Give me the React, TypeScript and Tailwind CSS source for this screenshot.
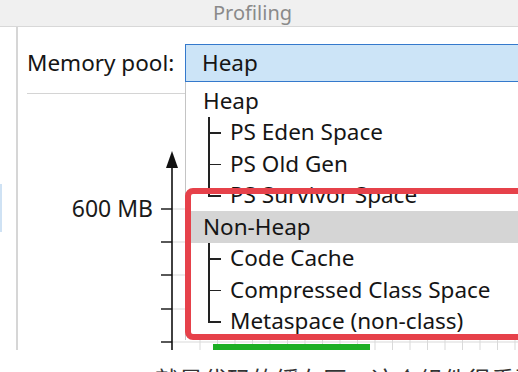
import React from "react";

const heapKids = ["PS Eden Space", "PS Old Gen", "PS Survivor Space"];
const nonHeapKids = ["Code Cache", "Compressed Class Space", "Metaspace (non-class)"];

function Branch({ last }: { last?: boolean }) {
  return (
    <span className="relative ml-[22px] w-[22px] self-stretch shrink-0">
      <span className={"absolute left-0 top-0 w-[1.5px] bg-[#222] " + (last ? "h-1/2" : "h-full")} />
      <span className="absolute left-0 top-1/2 h-[1.5px] w-[13px] bg-[#222]" />
    </span>
  );
}

function Row({ label, child, last, active }: { label: string; child?: boolean; last?: boolean; active?: boolean }) {
  return (
    <div className={"flex h-[31.5px] items-center " + (active ? "bg-[#d5d5d5]" : "")}>
      {child ? <Branch last={last} /> : <span className="w-[17px] shrink-0" />}
      <span className="whitespace-nowrap">{label}</span>
    </div>
  );
}

function Chart() {
  const ticks = [209, 242, 275, 309, 342];
  const cols: number[] = [];
  for (let x = 200; x < 520; x += 17.5) cols.push(x);
  return (
    <svg width="500" height="256" className="block">
      <g transform="translate(-18,-94)">
        {ticks.map((y) => (
          <line key={y} x1="172" x2="520" y1={y} y2={y} stroke="#d9d9d9" strokeWidth="1" />
        ))}
        {cols.map((x) => (
          <line key={x} x1={x} x2={x} y1="150" y2="350" stroke="#d9d9d9" strokeWidth="1" />
        ))}
        <rect x="213" y="344" width="157" height="8" fill="#1caf24" />
        <line x1="172" x2="172" y1="166" y2="352" stroke="#111" strokeWidth="1.6" />
        <polygon points="166,168 178,168 172,151" fill="#111" />
        {ticks.map((y) => (
          <line key={"t" + y} x1="161" x2="172" y1={y} y2={y} stroke="#111" strokeWidth="1.4" />
        ))}
        <text x="153" y="217" textAnchor="end" fontSize="23" fill="#1a1a1a" fontFamily="'Noto Sans', sans-serif">
          600 MB
        </text>
      </g>
    </svg>
  );
}

export default function App() {
  return (
    <div className="relative h-[372px] w-[518px] overflow-hidden bg-white font-['Noto_Sans',sans-serif] text-[#151515]">
      <div className="flex h-[27px] items-center border-b border-[#d8d8d8] bg-[#f0f0f0]">
        <span className="ml-[213px] text-[20px] leading-none text-[#8a8a8a]">Profiling</span>
      </div>

      <div className="flex h-[323px]">
        <div className="flex w-[18px] shrink-0 flex-col border-r-2 border-[#d6d6d6]">
          <span className="mt-[157px] h-[48px] w-[2px] bg-[#cfe2f4]" />
        </div>

        <div className="relative flex-1">
          <div className="flex items-center pl-[9px] pt-[17px]">
            <span className="w-[158px] shrink-0 whitespace-nowrap text-[22.5px]">Memory pool:</span>
            <div className="-mr-[10px] flex h-[38px] flex-1 items-center border-[1.5px] border-[#3479cc] bg-[#cce4f7] pl-[16px] text-[22.5px]">
              Heap
            </div>
          </div>
          <div className="ml-[9px] mt-[11px] h-px w-[158px] bg-[#d4d4d4]" />
          <Chart />

          <div className="absolute left-[167px] top-[55px] -right-[10px] h-[258px] border-l border-[#c4c4c4] bg-white pt-[3px] text-[22.5px] leading-none">
            <Row label="Heap" />
            {heapKids.map((k, i) => (
              <Row key={k} label={k} child last={i === heapKids.length - 1} />
            ))}
            <Row label="Non-Heap" active />
            {nonHeapKids.map((k, i) => (
              <Row key={k} label={k} child last={i === nonHeapKids.length - 1} />
            ))}
          </div>

          <div className="absolute left-[167px] top-[161px] -right-[10px] h-[152px] rounded-[8px] border-[6px] border-[#e6414a]" />
        </div>
      </div>

      <div className="h-[22px] overflow-hidden whitespace-nowrap pl-[155px] pt-[17px] font-['Noto_Sans_CJK_SC',sans-serif] text-[24px] leading-none text-[#333]">
        就是代码的缓存区，这个组件很重要
      </div>
    </div>
  );
}
